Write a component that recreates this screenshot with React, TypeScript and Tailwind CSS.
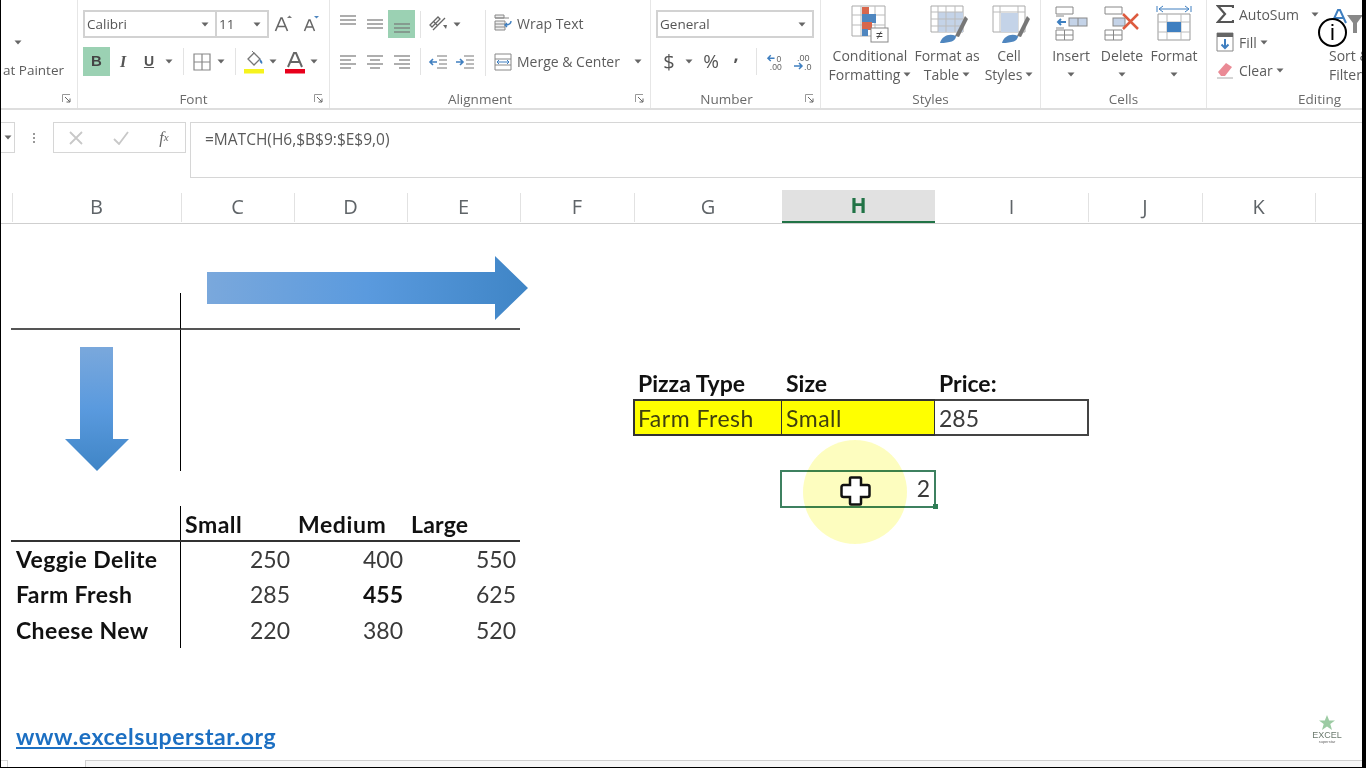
import React from "react";

const Drop = ({ c = "" }: { c?: string }) => (
  <svg width="8" height="5" viewBox="0 0 8 5" className={c}><path d="M0.5 0.5h7L4 4.5z" fill="#666" /></svg>
);
const Slot = ({ w, children, c = "" }: { w: string; children?: React.ReactNode; c?: string }) => (
  <div className={`flex items-center justify-center h-full shrink-0 ${w} ${c}`}>{children}</div>
);
const Launcher = () => (
  <svg width="10" height="10" viewBox="0 0 10 10" className="absolute right-[5px] bottom-[4px]">
    <path d="M0.5 8V0.5H8" fill="none" stroke="#999" /><path d="M3 3l5 5M8 4.5V8H4.5" fill="none" stroke="#666" />
  </svg>
);
const Sep = () => <div className="w-px h-[27px] bg-[#e3e3e3]" />;
const Lines = ({ rows }: { rows: [number, number, number][] }) => (
  <svg width="20" height="20" viewBox="0 0 20 20">
    {rows.map(([y, x1, x2], i) => <path key={i} d={`M${x1} ${y}H${x2}`} stroke="#777" strokeWidth="1.2" />)}
  </svg>
);
const Group = ({ w, label, launcher, labelC = "", children }: { w: string; label: string; launcher?: boolean; labelC?: string; children: React.ReactNode }) => (
  <div className={`relative flex flex-col h-[108px] shrink-0 border-r border-[#e6e6e6] ${w}`}>
    <div className="h-[90px] shrink-0">{children}</div>
    <div className={`text-center text-[13.5px] leading-[18px] text-[#6a6a6a] font-['Open_Sans',sans-serif] ${labelC}`}>{label}</div>
    {launcher && <Launcher />}
  </div>
);
const Big = ({ w, icon, l1, l2, drop, c = "" }: { w: string; icon: React.ReactNode; l1: string; l2?: string; drop?: boolean; c?: string }) => (
  <div className={`flex flex-col items-center pt-[2px] shrink-0 ${w}`}>
    <div className={`h-[44px] flex items-center justify-center ${c}`}>{icon}</div>
    <div className="text-[14px] leading-[19px] text-[#5c5c5c] whitespace-nowrap">{l1}</div>
    <div className="text-[14px] leading-[19px] text-[#5c5c5c] whitespace-nowrap flex items-center gap-[3px] h-[19px]">
      {l2 && <span>{l2}</span>}{drop && <Drop />}
    </div>
  </div>
);

const CondIcon = () => (
  <svg width="38" height="38" viewBox="0 0 38 38">
    <path d="M1 1h33v30H1z" fill="#fff" stroke="#aaa" />
    <path d="M1 10h33M1 20h33M10 1v30M24 1v30" stroke="#bbb" />
    <rect x="11" y="2" width="7" height="8" fill="#d9674c" />
    <rect x="11" y="9" width="14" height="9" fill="#4f86bf" />
    <rect x="11" y="17" width="10" height="8" fill="#d9674c" />
    <rect x="11" y="24" width="6" height="7" fill="#4f86bf" />
    <rect x="20" y="23" width="17" height="14" fill="#fff" stroke="#888" />
    <text x="28.5" y="34" textAnchor="middle" fontSize="12" fill="#444" fontFamily="Liberation Sans, sans-serif">≠</text>
  </svg>
);
const TableIcon = () => (
  <svg width="38" height="40" viewBox="0 0 38 40">
    <path d="M1 2h32v26H1z" fill="#fff" stroke="#aaa" />
    <rect x="8" y="8" width="25" height="20" fill="#c4d3e8" />
    <path d="M1 8h32M1 15h32M1 22h32M8 2v26M16 2v26M25 2v26" stroke="#bbb" />
    <path d="M25 32l10-20 3 3-9 18z" fill="#777" />
    <path d="M10 39c2-7 9-10 16-7 0 5-6 7-16 7z" fill="#4f86bf" />
  </svg>
);
const CellStyleIcon = () => (
  <svg width="38" height="40" viewBox="0 0 38 40">
    <path d="M1 2h32v26H1z" fill="#fff" stroke="#aaa" />
    <path d="M1 8h32M8 2v26M26 2v26" stroke="#bbb" />
    <rect x="9" y="9" width="17" height="19" fill="#c4d3e8" />
    <path d="M25 32l10-20 3 3-9 18z" fill="#777" />
    <path d="M10 39c2-7 9-10 16-7 0 5-6 7-16 7z" fill="#4f86bf" />
  </svg>
);
const InsertIcon = () => (
  <svg width="34" height="36" viewBox="0 0 34 36">
    <path d="M1 1h17v7H1zM1 24h17v10H1zM9.500 24v10M1 29h17" fill="#fff" stroke="#888" />
    <rect x="14" y="12" width="18" height="8" fill="#c4d3e8" stroke="#888" />
    <path d="M23 12v8" stroke="#888" />
    <path d="M11 16H3m3-3-3 3 3 3" fill="none" stroke="#3d7fc0" strokeWidth="2" />
    <path d="M1 10h8M1 22h8" stroke="#888" />
  </svg>
);
const DeleteIcon = () => (
  <svg width="38" height="36" viewBox="0 0 38 36">
    <path d="M1 1h17v7H1zM1 24h17v10H1zM9.500 24v10M1 29h17" fill="#fff" stroke="#888" />
    <rect x="9" y="12" width="12" height="8" fill="#c4d3e8" stroke="#888" />
    <path d="M19 8l15 15M34 8L19 23" stroke="#dd5b3f" strokeWidth="2.5" />
  </svg>
);
const FormatIcon = () => (
  <svg width="36" height="40" viewBox="0 0 36 40">
    <path d="M2 10h32v26H2z" fill="#fff" stroke="#999" />
    <path d="M2 18h32M2 28h32M11 10v26M25 10v26" stroke="#bbb" />
    <rect x="11" y="18" width="14" height="10" fill="#3f7fc0" />
    <path d="M1 2v6M35 2v6M3 5h30M7 2L3 5l4 3M29 2l4 3-4 3" fill="none" stroke="#3f7fc0" />
  </svg>
);

const HCell = ({ t, w, on }: { t: string; w: string; on?: boolean }) => (
  <div className={`h-[33px] shrink-0 flex items-center justify-center text-[20px] font-['Open_Sans',sans-serif] ${w} ${on ? "bg-[#e1e1e1] text-[#217346] font-bold text-[21px] border-b-2 border-[#217346]" : "text-[#5f6468]"}`}>
    {t}
  </div>
);
const HSep = () => <div className="w-px h-[29px] mt-[3px] bg-[#e2e2e2] shrink-0 -mr-px relative z-10" />;

const T = ({ c = "", children }: { c?: string; children?: React.ReactNode }) => (
  <div className={`flex items-center whitespace-nowrap ${c}`}>{children}</div>
);

export default function App() {
  return (
    <div className="relative box-border w-[1366px] h-[768px] overflow-hidden bg-white border-l border-r-4 border-b border-black blur-[0.35px] font-['Open_Sans',sans-serif] text-[#5c5c5c]">
      {/* Ribbon */}
      <div className="flex h-[110px] border-b-2 border-[#dedede]">
        <Group w="w-[77px]" label="" launcher>
          <div className="h-[50px] flex items-end pb-[5px] pl-[13px]"><Drop /></div>
          <div className="text-[13.5px] leading-[20px] mt-[10px] text-right pr-[13px] whitespace-nowrap">at Painter</div>
        </Group>
        <Group w="w-[252px]" label="Font" labelC="pr-[20px]" launcher>
          <div className="pl-[5px] pt-[10px]">
            <div className="flex h-[28px] items-center">
              <div className="w-[134px] h-[28px] border-2 border-[#d2d2d2] flex items-center justify-between pl-[2px] pr-[6px] text-[13.5px] text-[#555]">Calibri<Drop /></div>
              <div className="w-[52px] h-[28px] border-2 border-l-0 border-[#d2d2d2] flex items-center justify-between pl-[2px] pr-[6px] text-[13.5px] text-[#555]">11<Drop /></div>
              <Slot w="w-[28px]">
                <svg width="18" height="18" viewBox="0 0 18 18"><path d="M1.500 16L7 3h1l5.500 13M4 11.500h7" fill="none" stroke="#666" strokeWidth="1.600" /><path d="M13 3l2.500-2.500L18 3z" fill="#777" /></svg>
              </Slot>
              <Slot w="w-[27px]">
                <svg width="16" height="18" viewBox="0 0 16 18"><path d="M1.500 16L6 5h1l4.500 11M3.500 12h6" fill="none" stroke="#666" strokeWidth="1.500" /><path d="M11 1h5l-2.500 2.500z" fill="#4f86bf" /></svg>
              </Slot>
            </div>
            <div className="flex h-[29px] mt-[9px] items-center">
              <Slot w="w-[27px]" c="bg-[#9bd1b3] font-['Liberation_Sans',sans-serif] font-bold text-[15px] text-[#444]">B</Slot>
              <Slot w="w-[26px]" c="font-['Liberation_Serif',serif] italic font-bold text-[16px] text-[#555]">I</Slot>
              <Slot w="w-[26px]" c="font-['Liberation_Sans',sans-serif] font-bold text-[14px] text-[#555] underline">U</Slot>
              <Slot w="w-[14px]"><Drop /></Slot>
              <Slot w="w-[14px]"><Sep /></Slot>
              <Slot w="w-[24px]">
                <svg width="18" height="18" viewBox="0 0 18 18"><path d="M1 1h16v16H1zM9 1v16M1 9h16" fill="none" stroke="#888" strokeWidth="1.200" /></svg>
              </Slot>
              <Slot w="w-[14px]"><Drop /></Slot>
              <Slot w="w-[14px]"><Sep /></Slot>
              <Slot w="w-[23px]">
                <svg width="22" height="24" viewBox="0 0 22 24"><path d="M5 9l6-6 6 6-6 6z" fill="#fff" stroke="#777" strokeWidth="1.300" /><path d="M9 1l3 3" stroke="#777" /><path d="M17 9c2 2 3 3 2 5-2-1-3-3-2-5z" fill="#3f7fc0" /><rect x="1" y="19" width="20" height="4.500" fill="#f6f31e" /></svg>
              </Slot>
              <Slot w="w-[16px]"><Drop /></Slot>
              <Slot w="w-[27px]">
                <svg width="22" height="24" viewBox="0 0 22 24"><path d="M4 17L10 3h2l6 14M6.500 12h9" fill="none" stroke="#666" strokeWidth="2" /><rect x="1" y="19" width="20" height="4.500" fill="#e8001c" /></svg>
              </Slot>
              <Slot w="w-[12px]"><Drop /></Slot>
            </div>
          </div>
        </Group>
        <Group w="w-[321px]" label="Alignment" labelC="pr-[20px]" launcher>
          <div className="flex pt-[10px]">
            <div className="w-[155px] pl-[4px] shrink-0">
              <div className="flex h-[28px]">
                <Slot w="w-[27px]"><Lines rows={[[2, 2, 18], [6, 2, 18], [10, 2, 18]]} /></Slot>
                <Slot w="w-[27px]"><Lines rows={[[6, 2, 18], [10, 2, 18], [14, 2, 18]]} /></Slot>
                <Slot w="w-[27px]" c="bg-[#9bd1b3]"><Lines rows={[[10, 2, 18], [14, 2, 18], [18, 2, 18]]} /></Slot>
                <Slot w="w-[10px]"><Sep /></Slot>
                <Slot w="w-[26px]">
                  <svg width="20" height="20" viewBox="0 0 20 20"><path d="M2 11l8-8 2 2-8 8zM6 8l3 3M5 16L17 4" fill="none" stroke="#666" strokeWidth="1.300" /><path d="M15 11l4 0-1 4z" fill="#666" /></svg>
                </Slot>
                <Slot w="w-[12px]"><Drop /></Slot>
              </div>
              <div className="flex h-[29px] mt-[9px]">
                <Slot w="w-[27px]"><Lines rows={[[4, 2, 18], [8, 2, 13], [12, 2, 18], [16, 2, 13]]} /></Slot>
                <Slot w="w-[27px]"><Lines rows={[[4, 2, 18], [8, 5, 15], [12, 2, 18], [16, 5, 15]]} /></Slot>
                <Slot w="w-[27px]"><Lines rows={[[4, 2, 18], [8, 7, 18], [12, 2, 18], [16, 7, 18]]} /></Slot>
                <Slot w="w-[10px]"><Sep /></Slot>
                <Slot w="w-[26px]">
                  <svg width="20" height="20" viewBox="0 0 20 20"><path d="M9 4h10M11 8h8M11 12h8M9 16h10" stroke="#777" /><path d="M9 10H2m3-3-3 3 3 3" fill="none" stroke="#3f7fc0" strokeWidth="1.600" /></svg>
                </Slot>
                <Slot w="w-[28px]">
                  <svg width="20" height="20" viewBox="0 0 20 20"><path d="M9 4h10M11 8h8M11 12h8M9 16h10" stroke="#777" /><path d="M1 10h7M5 7l3 3-3 3" fill="none" stroke="#3f7fc0" strokeWidth="1.600" /></svg>
                </Slot>
              </div>
            </div>
            <div className="h-[66px] w-px bg-[#e3e3e3] shrink-0" />
            <div className="pl-[8px] flex-1">
              <div className="flex items-center h-[28px] -mt-px gap-[5px] text-[14px] whitespace-nowrap">
                <svg width="18" height="18" viewBox="0 0 18 18"><path d="M1 1h9v3H1zM1 7h10v9H1z" fill="#eee" stroke="#888" /><path d="M1 10h10M1 13h10M1 4h14" stroke="#888" /><path d="M17 7c0 3-2 4-6 4m2-2-2 2 2 2" fill="none" stroke="#3f7fc0" strokeWidth="1.400" /></svg>
                Wrap Text
              </div>
              <div className="flex items-center h-[29px] mt-[10px] gap-[5px] text-[14px] whitespace-nowrap">
                <svg width="18" height="18" viewBox="0 0 18 18"><path d="M1 1h16v16H1zM1 6h16M1 12h16" fill="#fff" stroke="#888" /><path d="M3 9h12M5 7L3 9l2 2M13 7l2 2-2 2" fill="none" stroke="#3f7fc0" /></svg>
                Merge &amp; Center<Drop c="ml-[9px]" />
              </div>
            </div>
          </div>
        </Group>
        <Group w="w-[170px]" label="Number" labelC="pr-[18px]" launcher>
          <div className="pl-[5px] pt-[10px]">
            <div className="w-[158px] h-[28px] border-2 border-[#d2d2d2] flex items-center justify-between pl-[2px] pr-[6px] text-[13.5px] text-[#555]">General<Drop /></div>
            <div className="flex h-[29px] mt-[9px]">
              <Slot w="w-[26px]" c="text-[20px] text-[#555]">$</Slot>
              <Slot w="w-[14px]"><Drop /></Slot>
              <Slot w="w-[30px]" c="text-[19px] text-[#555]">%</Slot>
              <Slot w="w-[20px]" c="text-[18px] font-bold text-[#555]"><span className="-mt-[14px]">,</span></Slot>
              <Slot w="w-[20px]"><Sep /></Slot>
              <Slot w="w-[19px]">
                <svg width="20" height="18" viewBox="0 0 20 18"><path d="M9 5H2M5 2L2 5l3 3" fill="none" stroke="#3f7fc0" strokeWidth="1.500" /><text x="11" y="9" fontSize="9" fill="#666" fontFamily="Liberation Sans, sans-serif">0</text><text x="4" y="17" fontSize="9" fill="#666" fontFamily="Liberation Sans, sans-serif">.00</text></svg>
              </Slot>
              <Slot w="w-[5px]" />
              <Slot w="w-[24px]">
                <svg width="20" height="18" viewBox="0 0 20 18"><text x="5" y="8" fontSize="9" fill="#666" fontFamily="Liberation Sans, sans-serif">.00</text><path d="M2 13h8M7 10l3 3-3 3" fill="none" stroke="#3f7fc0" strokeWidth="1.500" /><text x="12" y="17" fontSize="9" fill="#666" fontFamily="Liberation Sans, sans-serif">.0</text></svg>
              </Slot>
            </div>
          </div>
        </Group>
        <Group w="w-[220px]" label="Styles">
          <div className="flex pl-[11px]">
            <Big w="w-[76px]" icon={<CondIcon />} l1="Conditional" l2="Formatting" drop />
            <Big w="w-[78px]" c="ml-[3px]" icon={<TableIcon />} l1="Format as" l2="Table" drop />
            <Big w="w-[46px]" c="ml-[3px]" icon={<CellStyleIcon />} l1="Cell" l2="Styles" drop />
          </div>
        </Group>
        <Group w="w-[166px]" label="Cells">
          <div className="flex pl-[5px]">
            <Big w="w-[50px]" c="ml-[2px]" icon={<InsertIcon />} l1="Insert" drop />
            <Big w="w-[52px]" c="ml-[2px]" icon={<DeleteIcon />} l1="Delete" drop />
            <Big w="w-[52px]" icon={<FormatIcon />} l1="Format" drop />
          </div>
        </Group>
        <Group w="w-[226px]" label="Editing">
          <div className="flex">
            <div className="w-[122px] pl-[9px] shrink-0 text-[14px] whitespace-nowrap">
              <div className="flex items-center h-[28px] gap-[5px]">
                <svg width="18" height="20" viewBox="0 0 18 20"><path d="M17 4V2H2l7 8-7 8h15v-2" fill="none" stroke="#555" strokeWidth="2.200" /></svg>
                AutoSum<Drop c="ml-[7px]" />
              </div>
              <div className="flex items-center h-[28px] gap-[5px]">
                <svg width="18" height="20" viewBox="0 0 18 20"><path d="M1 1h16v18H1z" fill="#fff" stroke="#888" /><path d="M1 1h16v4H1z" fill="#666" /><path d="M9 7v9M5.500 12.500L9 16l3.500-3.500" fill="none" stroke="#3f7fc0" strokeWidth="2" /></svg>
                Fill<Drop c="-ml-[2px]" />
              </div>
              <div className="flex items-center h-[28px] gap-[5px]">
                <svg width="18" height="18" viewBox="0 0 18 18"><path d="M2 11l8-9 6 4-7 9H5z" fill="#ea8a95" /><path d="M1 17h16" stroke="#aaa" /></svg>
                Clear<Drop c="-ml-[2px]" />
              </div>
            </div>
            <div className="shrink-0 pt-[2px]">
              <div className="h-[44px] w-[40px] pt-[5px]">
                <svg width="36" height="36" viewBox="0 0 36 36"><path d="M3 16L9 3h2l6 13M5 11h10" fill="none" stroke="#3f7fc0" strokeWidth="2" /><path d="M18 8h16l-6 8v10h-4V16z" fill="#888" /></svg>
              </div>
              <div className="text-[14px] leading-[19px] whitespace-nowrap">Sort &amp;</div>
              <div className="text-[14px] leading-[19px] whitespace-nowrap">Filter</div>
            </div>
          </div>
        </Group>
      </div>

      {/* Formula bar */}
      <div className="flex h-[80px] pt-[12px] items-start">
        <div className="w-[14px] h-[31px] border border-l-0 border-[#d6d6d6] flex items-center justify-end pr-[2px] shrink-0"><Drop /></div>
        <div className="w-[38px] h-[31px] flex flex-col items-center justify-center gap-[2px] shrink-0">
          <i className="size-[2px] bg-[#999]" /><i className="size-[2px] bg-[#999]" /><i className="size-[2px] bg-[#999]" />
        </div>
        <div className="w-[133px] h-[31px] border border-[#d6d6d6] flex items-center shrink-0">
          <Slot w="w-[44px]"><svg width="14" height="14" viewBox="0 0 14 14"><path d="M1 1l12 12M13 1L1 13" stroke="#c8c8c8" strokeWidth="1.800" /></svg></Slot>
          <Slot w="w-[45px]"><svg width="16" height="14" viewBox="0 0 16 14"><path d="M1 8l5 5L15 1" fill="none" stroke="#c8c8c8" strokeWidth="1.800" /></svg></Slot>
          <Slot w="w-[42px]" c="font-['Liberation_Serif',serif] italic text-[16px] text-[#666]">f<span className="text-[11px]">x</span></Slot>
        </div>
        <div className="w-[4px] shrink-0" />
        <div className="flex-1 h-[56px] border-t border-l border-b border-[#d6d6d6] pl-[14px] pt-[6px] text-[15.5px] leading-[20px] text-[#5a5a5a]">=MATCH(H6,$B$9:$E$9,0)</div>
      </div>

      {/* Column headers */}
      <div className="flex h-[34px] border-b border-[#cfcfcf]">
        <HCell t="" w="w-[11px]" /><HSep />
        <HCell t="B" w="w-[169px]" /><HSep />
        <HCell t="C" w="w-[113px]" /><HSep />
        <HCell t="D" w="w-[113px]" /><HSep />
        <HCell t="E" w="w-[113px]" /><HSep />
        <HCell t="F" w="w-[114px]" /><HSep />
        <HCell t="G" w="w-[148px]" />
        <HCell t="H" w="w-[153px]" on />
        <HCell t="I" w="w-[153px]" /><HSep />
        <HCell t="J" w="w-[114px]" /><HSep />
        <HCell t="K" w="w-[113px]" /><HSep />
      </div>

      {/* Sheet */}
      <div className="relative grid grid-cols-[10px_170px_113px_113px_113px_114px_148px_153px_153px_114px_113px_1fr] grid-rows-[repeat(15,35.3px)] font-['Lato',sans-serif] text-[23px] text-[#3a3a3a]">
        {/* Upper cross */}
        <T c="col-start-2 row-start-3 border-b-2 border-[#555]" />
        <T c="col-start-3 row-start-3 border-b-2 border-[#555] border-l border-l-black -mt-[2px] -ml-px" />
        <T c="col-start-4 row-start-3 border-b-2 border-[#555]" />
        <T c="col-start-5 row-start-3 border-b-2 border-[#555]" />
        <T c="col-start-3 row-start-4 row-end-8 border-l border-black -ml-px" />

        {/* Lookup table */}
        <T c="col-start-3 row-start-9 border-b-2 border-[#333] border-l border-l-black -ml-px pl-[4px] pt-[2px] font-bold tracking-[0.5px] text-[#111]">Small</T>
        <T c="col-start-2 row-start-9 border-b-2 border-[#333]" />
        <T c="col-start-4 row-start-9 border-b-2 border-[#333] pl-[4px] pt-[2px] font-bold tracking-[0.6px] text-[#111]">Medium</T>
        <T c="col-start-5 row-start-9 border-b-2 border-[#333] pl-[4px] pt-[2px] font-bold tracking-[0.2px] text-[#111]">Large</T>
        {[
          ["Veggie Delite", "250", "400", "550"],
          ["Farm Fresh", "285", "455", "625"],
          ["Cheese New", "220", "380", "520"],
        ].map((r, i) => (
          <React.Fragment key={r[0]}>
            <T c={`col-start-2 pl-[5px] font-bold tracking-[0.4px] text-[#111] ${["row-start-10", "row-start-11", "row-start-12"][i]}`}>{r[0]}</T>
            <T c={`col-start-3 justify-end pr-[4px] border-l border-black -ml-px ${["row-start-10", "row-start-11", "row-start-12"][i]}`}>{r[1]}</T>
            <T c={`col-start-4 justify-end pr-[4px] ${["row-start-10", "row-start-11", "row-start-12"][i]} ${i === 1 ? "font-bold text-[#111]" : ""}`}>{r[2]}</T>
            <T c={`col-start-5 justify-end pr-[4px] ${["row-start-10", "row-start-11", "row-start-12"][i]}`}>{r[3]}</T>
          </React.Fragment>
        ))}

        {/* Pizza lookup */}
        <T c="col-start-7 row-start-5 pl-[4px] font-bold text-[#111]">Pizza Type</T>
        <T c="col-start-8 row-start-5 pl-[4px] font-bold text-[#111]">Size</T>
        <T c="col-start-9 row-start-5 pl-[4px] font-bold text-[#111]">Price:</T>
        <T c="col-start-7 row-start-6 -mt-px -ml-px pl-[3px] pt-[2px] tracking-[0.5px] bg-[#ffff00] border-2 border-r border-[#333] text-[#3f3f10]">Farm Fresh</T>
        <T c="col-start-8 row-start-6 -mt-px pl-[4px] pt-[2px] tracking-[0.5px] bg-[#ffff00] border-y-2 border-r border-[#333] text-[#3f3f10]">Small</T>
        <T c="col-start-9 row-start-6 -mt-px -mr-px pl-[4px] pt-[2px] border-y-2 border-r-2 border-[#444]">285</T>

        {/* Selected cell */}
        <div className="col-start-8 row-start-8 relative flex items-center justify-end pr-[5px]">
          2
          <div className="absolute -left-[2px] -top-[1px] w-[156px] h-[38px] border-2 border-[#3d8160]" />
          <div className="absolute -right-[3px] -bottom-[3px] size-[5px] bg-[#2e7d56]" />
          <div className="absolute left-[21px] -top-[31px] size-[104px] rounded-full bg-[#fdfdb4] opacity-85 mix-blend-multiply" />
          <svg width="32" height="32" viewBox="0 0 32 32" className="absolute left-[58px] top-[4px]">
            <path d="M11 2.500h9a1 1 0 0 1 1 1V10h6.500a2 2 0 0 1 2 2v8a2 2 0 0 1-2 2H21v6.500a1 1 0 0 1-1 1h-9a1 1 0 0 1-1-1V22H3.500a2 2 0 0 1-2-2v-8a2 2 0 0 1 2-2H10V3.500a1 1 0 0 1 1-1z" fill="#fff" stroke="#111" strokeWidth="2.500" />
          </svg>
        </div>

        {/* Link */}
        <T c="col-start-2 col-end-5 row-start-15 pl-[5px] font-bold tracking-[0.6px] text-[#1c6fc2] underline">www.excelsuperstar.org</T>

        {/* Arrows */}
        <svg width="322" height="66" viewBox="0 0 322 66" className="absolute left-[206px] top-[32px]">
          <defs><linearGradient id="ar" x1="0" x2="1" y1="0" y2="0"><stop offset="0" stopColor="#7aa8dc" /><stop offset="0.5" stopColor="#5a9ade" /><stop offset="1" stopColor="#3f85c6" /></linearGradient></defs>
          <path d="M0 16H288V0l33 32-33 32V48H0z" fill="url(#ar)" />
        </svg>
        <svg width="66" height="126" viewBox="0 0 66 126" className="absolute left-[63px] top-[123px]">
          <defs><linearGradient id="ad" x1="0" x2="0" y1="0" y2="1"><stop offset="0" stopColor="#7aa8dc" /><stop offset="0.5" stopColor="#5a9ade" /><stop offset="1" stopColor="#3f85c6" /></linearGradient></defs>
          <path d="M16 0H49V92H65L33 124 1 92H16z" fill="url(#ad)" />
        </svg>

        {/* Watermark */}
        <div className="absolute left-[1311px] top-[491px] w-[30px] flex flex-col items-center leading-none font-['Liberation_Sans',sans-serif]">
          <svg width="18" height="16" viewBox="0 0 18 16"><path d="M9 0l2.200 5.500H17l-4.700 3.600L14 15l-5-3.500L4 15l1.700-5.900L1 5.500h5.800z" fill="#9ccba3" /></svg>
          <span className="text-[9px] text-[#6b7a6e]">EXCEL</span>
          <span className="text-[4px] text-[#666]">superstar</span>
        </div>
      </div>

      {/* Bottom scrollbar */}
      <div className="absolute left-0 right-0 bottom-0 flex h-[7px]">
        <div className="w-[7px] h-full border-t border-r border-[#d6d6d6]" />
        <div className="ml-[77px] flex-1 border-t border-l border-[#cfcfcf] bg-[#f6f6f6]" />
      </div>

      {/* Info overlay */}
      <div className="absolute left-[1317px] top-[18px] size-[29px] rounded-full border-2 border-black bg-white flex items-center justify-center font-['Liberation_Sans',sans-serif] text-[22px] leading-none text-black">i</div>
    </div>
  );
}
